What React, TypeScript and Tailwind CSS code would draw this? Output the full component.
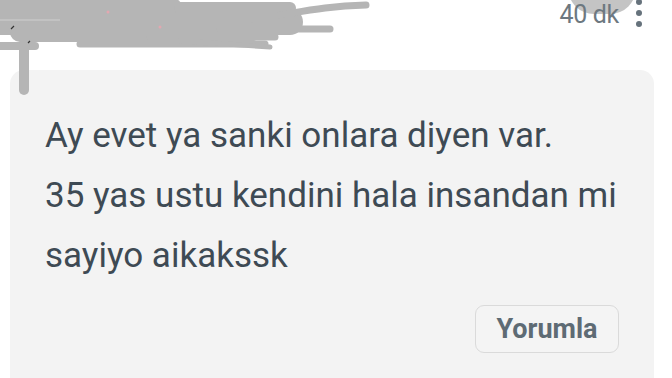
export default function App() {
  return (
    <div className="w-[672px] h-[378px] overflow-hidden bg-white font-['Roboto',sans-serif] relative">
      {/* header row: redacted name + time */}
      <div className="relative h-[70px] flex justify-end items-start pr-[30px]">
        <svg className="absolute left-0 top-0" width="380" height="96" viewBox="0 0 380 96" fill="none">
          <g stroke="#b5b5b5" strokeLinecap="round">
            <path d="M-10 10 H170" strokeWidth="26" />
            <path d="M0 22 H290" strokeWidth="26" />
            <path d="M20 32 H250" strokeWidth="20" />
            <path d="M180 8 H290" strokeWidth="12" />
            <path d="M280 15 C310 10 330 6 366 5" strokeWidth="7" />
            <path d="M220 29 H330" strokeWidth="7" />
            <path d="M150 37 H275" strokeWidth="7" />
            <path d="M80 44 H265" strokeWidth="7" />
            <path d="M-5 46 H35" strokeWidth="8" />
            <path d="M24 44 V90" strokeWidth="10" />
            <path d="M180 41 L270 47" strokeWidth="5" />
          </g>
          <path d="M0 20 H60" stroke="#c2c2c2" strokeWidth="2" />
          <circle cx="108" cy="12" r="1.5" fill="#e3a7b0" />
          <circle cx="160" cy="27" r="1.5" fill="#e3a7b0" />
          <path d="M14 26 l-3 3 M30 41 l-2 2" stroke="#333" strokeWidth="1.2" />
        </svg>
        <div className="absolute left-[568px] top-[-38px] w-[68px] h-[52px] rounded-full bg-[#c4c4c4]" />
        <div className="relative flex items-start">
          <span className="text-[25px] leading-[30px] text-[#6d7880] tracking-[-0.3px]">40 dk</span>
          <div className="flex flex-col gap-[5px] ml-[17px] mt-[-1px]">
            <span className="w-[6px] h-[6px] rounded-full bg-[#66727c]" />
            <span className="w-[6px] h-[6px] rounded-full bg-[#66727c]" />
            <span className="w-[6px] h-[6px] rounded-full bg-[#66727c]" />
          </div>
        </div>
      </div>

      {/* comment card */}
      <div className="mx-[10px] w-[644px] h-[340px] rounded-[14px] bg-[#f3f3f3] pt-[36px] px-[35px]">
        <p className="text-[35px] leading-[60px] text-[#3e4a54] whitespace-pre-line">
          {"Ay evet ya sanki onlara diyen var.\n35 yas ustu kendini hala insandan mi sayiyo aikakssk"}
        </p>
        <div className="flex justify-end mt-[19px]">
          <button className="w-[144px] h-[48px] rounded-[9px] border-[1.5px] border-[#dadada] bg-[#f4f4f4] text-[27px] font-bold text-[#5e6b74]">
            Yorumla
          </button>
        </div>
      </div>
    </div>
  );
}
